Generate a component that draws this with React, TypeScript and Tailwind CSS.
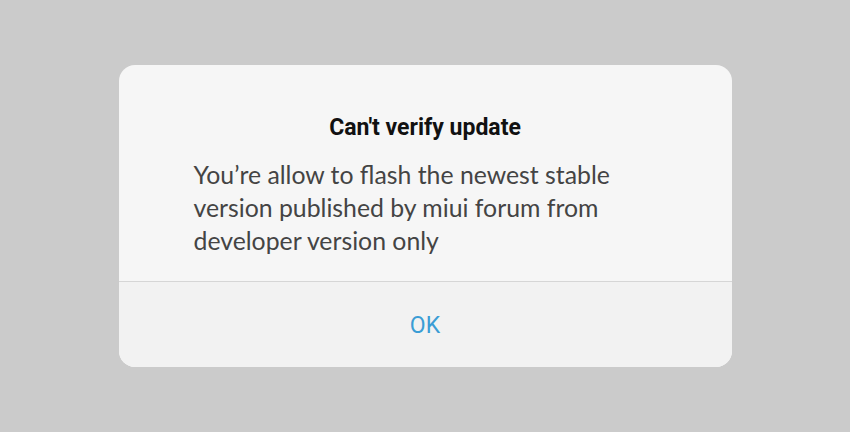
export default function App() {
  return (
    <div className="flex h-[432px] w-[850px] items-center justify-center bg-[#cbcbcb]">
      <div className="flex w-[613px] flex-col overflow-hidden rounded-[16px] bg-[#f6f6f6]">
        <div className="flex flex-col items-center pt-[48px] pb-[24px]">
          <h1 className="font-['Roboto',sans-serif] text-[23px] font-bold leading-[30px] text-[#111]">
            Can't verify update
          </h1>
          <p className="mt-[15px] self-start pl-[75px] font-['Lato',sans-serif] text-[24.8px] leading-[33px] text-[#444]">
            You’re allow to flash the newest stable
            <br />
            version published by miui forum from
            <br />
            developer version only
          </p>
        </div>
        <div className="h-px bg-[#d6d6d6]" />
        <div className="flex h-[85px] items-center justify-center bg-[#f2f2f2] pt-[3px]">
          <span className="font-['Roboto',sans-serif] text-[23px] text-[#3b9dd5]">OK</span>
        </div>
      </div>
    </div>
  )
}
